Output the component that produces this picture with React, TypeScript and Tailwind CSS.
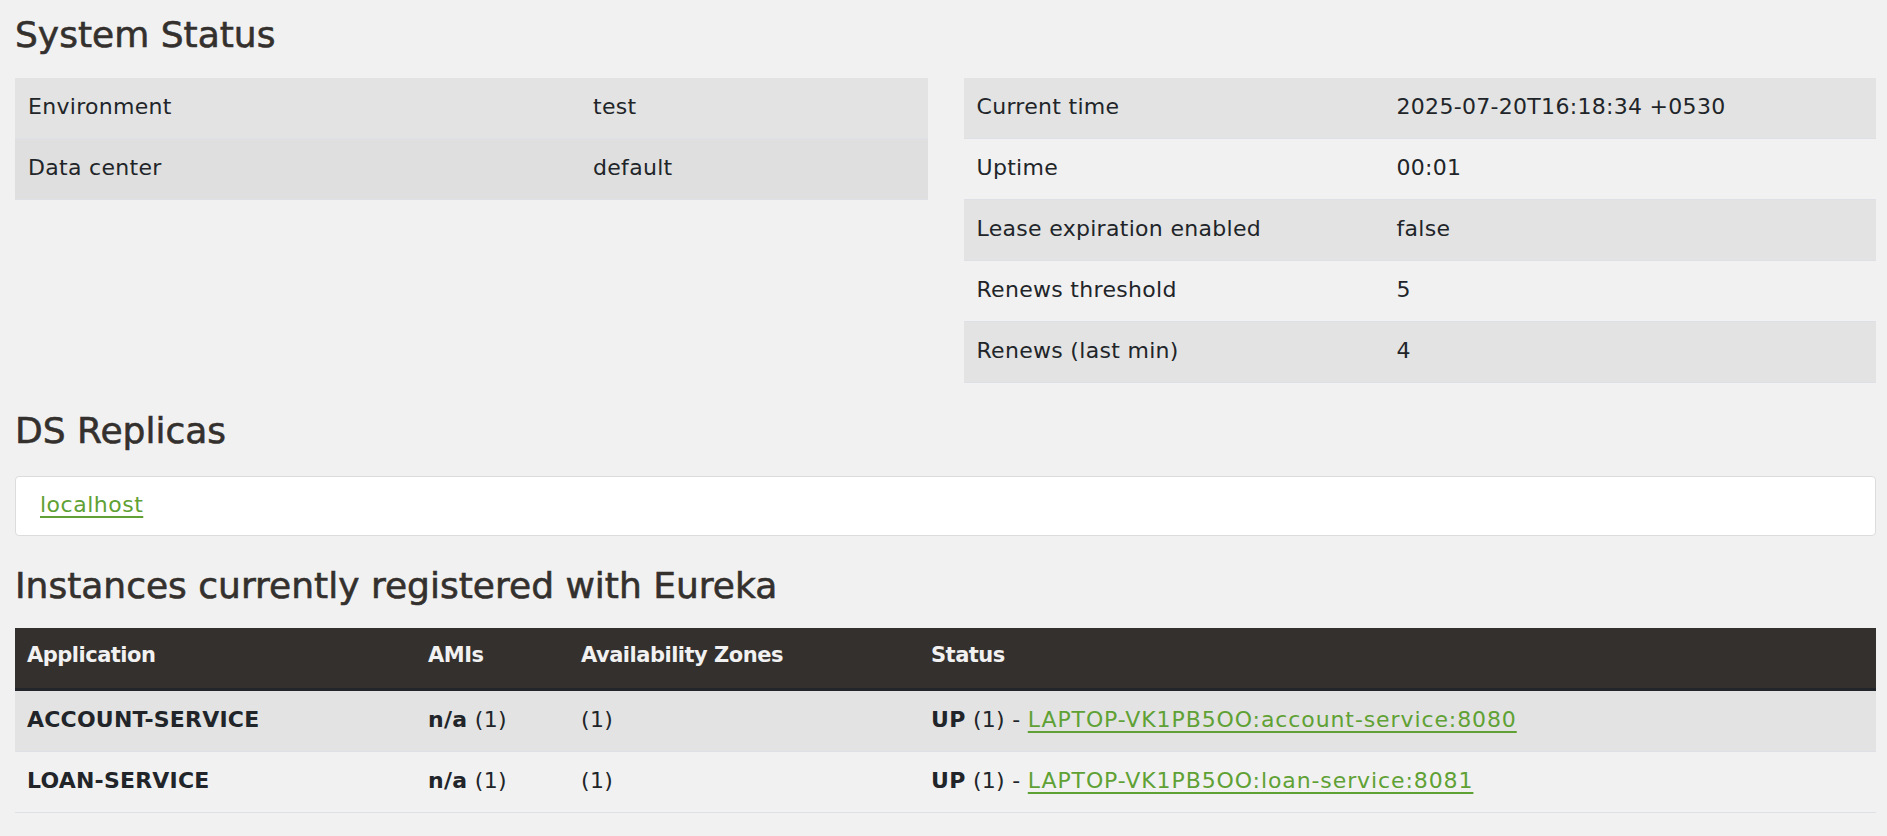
import React from "react";

const rowBase = "grid items-center h-[61px] border-b border-[#dde1e6]";

function KV({ rows, cols, hoverIdx }: { rows: [string, string][]; cols: string; hoverIdx?: number }) {
  return (
    <div className="flex flex-col">
      {rows.map(([k, v], i) => {
        let bg = i % 2 === 0 ? "bg-[#e3e3e3]" : "bg-[#f1f1f1]";
        if (hoverIdx === i) bg = "bg-[#dfdfdf]";
        return (
          <div key={k} className={`${rowBase} ${cols} ${bg}`}>
            <div className="pl-[13px] pb-[3px]">{k}</div>
            <div className="pl-[13px] pb-[3px]">{v}</div>
          </div>
        );
      })}
    </div>
  );
}

function Heading({ children, className }: { children: React.ReactNode; className: string }) {
  return (
    <h2
      className={`text-[36px] leading-[36px] font-normal text-[#34302d] tracking-[0px] [-webkit-text-stroke:0.6px_#34302d] ${className}`}
    >
      {children}
    </h2>
  );
}

const instCols = "grid-cols-[401px_153px_350px_1fr]";

export default function App() {
  return (
    <div className="min-h-[836px] bg-[#f1f1f1] pl-[15px] pr-[11px] font-['DejaVu_Sans',sans-serif] text-[22px] text-[#212529] tracking-[0.3px]">
      <Heading className="pt-[17px]">System Status</Heading>

      <div className="mt-[25px] grid grid-cols-2 gap-[36px]">
        <KV
          cols="grid-cols-[565px_1fr]"
          hoverIdx={1}
          rows={[
            ["Environment", "test"],
            ["Data center", "default"],
          ]}
        />
        <KV
          cols="grid-cols-[420px_1fr]"
          rows={[
            ["Current time", "2025-07-20T16:18:34 +0530"],
            ["Uptime", "00:01"],
            ["Lease expiration enabled", "false"],
            ["Renews threshold", "5"],
            ["Renews (last min)", "4"],
          ]}
        />
      </div>

      <Heading className="mt-[30px]">DS Replicas</Heading>

      <div className="mt-[27px] h-[60px] flex items-center bg-white border border-[#dcdcdc] rounded-[4px] pl-[24px] pb-[4px]">
        <a href="#" className="text-[#5fa134] underline underline-offset-[4px] tracking-[0.5px]">
          localhost
        </a>
      </div>

      <Heading className="mt-[32px]">Instances currently registered with Eureka</Heading>

      <div className="mt-[24px] flex flex-col">
        <div
          className={`grid ${instCols} items-center h-[63px] bg-[#34302d] text-[#f1f1f1] text-[21px] font-bold border-b-[3px] border-[#222529] tracking-[-0.5px]`}
        >
          <div className="pl-[12px] pb-[4px]">Application</div>
          <div className="pl-[12px] pb-[4px]">AMIs</div>
          <div className="pl-[12px] pb-[4px]">Availability Zones</div>
          <div className="pl-[12px] pb-[4px]">Status</div>
        </div>
        {[
          ["ACCOUNT-SERVICE", "LAPTOP-VK1PB5OO:account-service:8080", "bg-[#e3e3e3]"],
          ["LOAN-SERVICE", "LAPTOP-VK1PB5OO:loan-service:8081", "bg-[#f1f1f1]"],
        ].map(([app, link, bg]) => (
          <div key={app} className={`${rowBase} ${instCols} ${bg}`}>
            <div className="pl-[12px] pb-[3px] font-bold tracking-[0.2px]">{app}</div>
            <div className="pl-[12px] pb-[3px]">
              <b>n/a</b> (1)
            </div>
            <div className="pl-[12px] pb-[3px]">(1)</div>
            <div className="pl-[12px] pb-[3px]">
              <b>UP</b> (1) -{" "}
              <a href="#" className="text-[#5fa134] underline underline-offset-[4px] tracking-[0.9px]">
                {link}
              </a>
            </div>
          </div>
        ))}
      </div>
    </div>
  );
}
